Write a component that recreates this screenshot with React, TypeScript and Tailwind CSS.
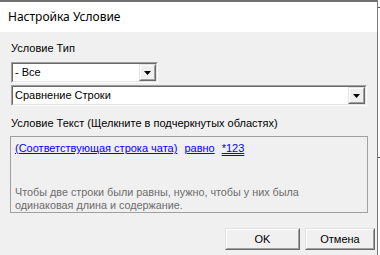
import React from "react";

const Sunken: React.FC<{ className?: string; children: React.ReactNode }> = ({ className = "", children }) => (
  <div className={`border border-t-[#a0a0a0] border-l-[#a0a0a0] border-b-white border-r-white ${className}`}>
    <div className="h-full border border-t-[#696969] border-l-[#696969] border-b-[#e3e3e3] border-r-[#e3e3e3] bg-white flex items-center">
      {children}
    </div>
  </div>
);

const Raised: React.FC<{ className?: string; children: React.ReactNode }> = ({ className = "", children }) => (
  <div className={`border border-t-[#e3e3e3] border-l-[#e3e3e3] border-b-[#696969] border-r-[#696969] ${className}`}>
    <div className="h-full border border-t-white border-l-white border-b-[#a0a0a0] border-r-[#a0a0a0] bg-[#f0f0f0] flex items-center justify-center">
      {children}
    </div>
  </div>
);

const Arrow = () => (
  <svg width="7" height="4" viewBox="0 0 7 4">
    <path d="M0 0h7L3.5 4z" fill="#000" />
  </svg>
);

const Combo: React.FC<{ value: string; className?: string }> = ({ value, className = "" }) => (
  <Sunken className={`h-[21px] ${className}`}>
    <span className="flex-1 pl-[2px] leading-[13px]">{value}</span>
    <Raised className="w-[17px] h-[17px]">
      <Arrow />
    </Raised>
  </Sunken>
);

export default function App() {
  return (
    <div
      className="w-[380px] h-[255px] bg-white relative overflow-hidden text-[11px] text-black"
      style={{ fontFamily: '"Liberation Sans", Arial, sans-serif' }}
    >
      <div className="absolute right-0 top-[7px] w-[2px] h-px bg-[#555]" />
      <div className="absolute right-0 top-[157px] w-[2px] h-px bg-[#555]" />
      <div className="w-[378px] h-[255px] flex flex-col border-t-2 border-t-[#707070] border-r border-r-[#7a7a7a]">
        <div
          className="h-[30px] bg-white flex items-center pl-[8px] text-[12px]"
          style={{ fontFamily: '"Noto Sans", "Open Sans", sans-serif' }}
        >
          Настройка Условие
        </div>
        <div className="flex-1 bg-[#f0f0f0] flex flex-col pl-[11px] pr-[10px] pt-[10px]">
          <div className="leading-[13px]">Условие Тип</div>
          <Combo value="- Все" className="mt-[7px] w-[147px]" />
          <Combo value="Сравнение Строки" className="mt-[2px] w-[356px]" />
          <div className="leading-[13px] mt-[11px]">Условие Текст (Щелкните в подчеркнутых областях)</div>
          <div className="mt-[6px] -ml-px w-[358px] h-[77px] border border-[#a0a0a0] flex flex-col pl-[4px] pt-[5px]">
            <div className="flex leading-[13px] text-[#0000ff]">
              <span className="underline">(Соответствующая строка чата)</span>
              <span className="underline ml-[7px]">равно</span>
              <span className="underline decoration-double ml-[7px]">*123</span>
            </div>
            <div className="mt-[31px] leading-[13px] text-[10.8px] text-[#6d6d6d]">
              Чтобы две строки были равны, нужно, чтобы у них была
              <br />
              одинаковая длина и содержание.
            </div>
          </div>
          <div className="mt-[15px] flex justify-end gap-[6px]">
            <Raised className="w-[75px] h-[22px] -mr-[1px]">
              <span>OK</span>
            </Raised>
            <Raised className="w-[70px] h-[22px] -mr-[8px]">
              <span>Отмена</span>
            </Raised>
          </div>
        </div>
      </div>
    </div>
  );
}
